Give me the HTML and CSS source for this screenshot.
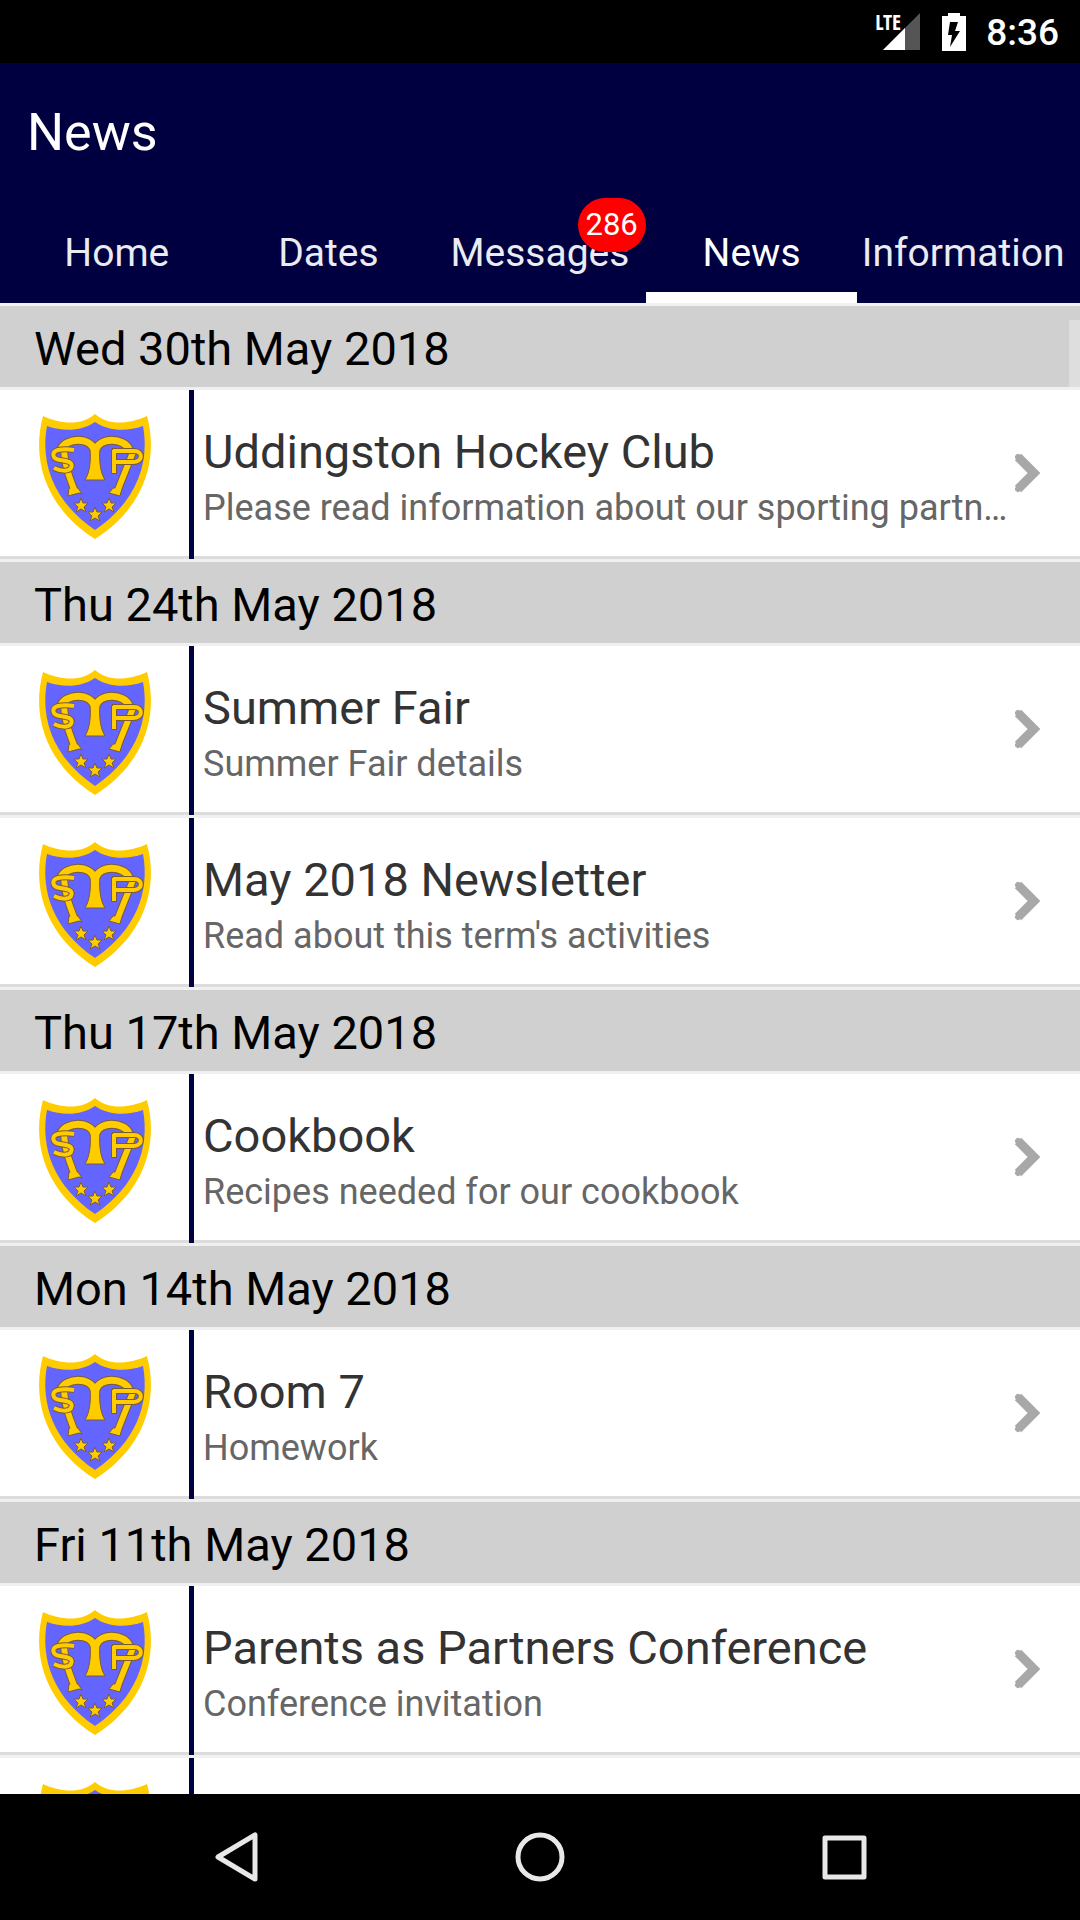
FILE: index.html
```html
<!DOCTYPE html>
<html lang="en">
<head>
<meta charset="utf-8">
<meta name="viewport" content="width=device-width, initial-scale=1">
<title>News</title>
<link rel="stylesheet" href="styles.css">
</head>
<body>
<svg class="defs" aria-hidden="true">
  <symbol id="crest" viewBox="0 0 114 126">
    <path fill="#fc0" d="M5 2C22 10 44 12 57 0C70 12 92 10 109 2C121 46 106 94 57 125C8 94 -7 46 5 2Z"/>
    <path fill="#6464ff" d="M9 12C26 18 44 17 57 8C70 17 88 18 105 12C112 50 98 88 57 116C16 88 2 50 9 12Z"/>
    <g fill="none" stroke-linejoin="round">
      <g stroke="#7a5a3a">
        <path stroke-width="9" d="M23 35C28 24 52 22 57 37C62 22 86 24 91 35"/>
        <path stroke-width="8" d="M26 36C27 54 32 64 37 78M95 38L79 78"/>
      </g>
      <path fill="#fc0" stroke="#7a5a3a" d="M52 34H62C61 46 62 58 67 66H47C52 58 53 46 52 34Z"/>
      <path fill="#fc0" stroke="#7a5a3a" d="M31 74H40L44 80L41 79L30 82ZM75 74H84L82 82L71 79Z"/>
      <g stroke="#fc0">
        <path stroke-width="7" d="M23 35C28 24 52 22 57 37C62 22 86 24 91 35"/>
        <path stroke-width="6" d="M26 36C27 54 32 64 37 78M95 38L79 78"/>
      </g>
      <path id="letters" stroke="#7a5a3a" stroke-width="6" d="M36 36C30 35 25 35 20 36C13 38 14 45 22 46C29 47 36 48 33 54C30 58 22 57 16 54M76 35V60M74 37H96C106 37 105 49 94 48H77"/>
      <path stroke="#fc0" stroke-width="4" d="M36 36C30 35 25 35 20 36C13 38 14 45 22 46C29 47 36 48 33 54C30 58 22 57 16 54M76 36V59M75 37H96C106 37 105 49 94 48H77"/>
    </g>
    <g fill="#fc0" stroke="#7a5a3a">
      <path id="star" d="M43 84L45 89L50 89L46 93L48 98L43 95L38 98L40 93L36 89L41 89Z"/>
      <use href="#star" x="28"/>
      <use href="#star" x="14" y="9"/>
    </g>
  </symbol>
  <symbol id="chevron" viewBox="0 0 28 44">
    <path d="M5 6L21 22L5 38" fill="none" stroke="#a8a8a8" stroke-width="9"/>
    <path d="M5 6L21 22L5 38" fill="none" stroke="#a8a8a8" stroke-width="6" stroke-linecap="round"/>
  </symbol>
</svg>
<div class="screen">
  <div class="status">
    <div class="signal">
      <svg viewBox="0 0 37 37"><path fill="#555" d="M37 0V37H0Z"/><path fill="#fff" d="M22 15V37H0Z"/></svg>
      <span class="lte">LTE</span>
    </div>
    <svg class="battery" viewBox="0 0 24 38"><path fill="#fff" d="M6 0H18V3H24V38H0V3H6Z"/><path d="M8 9H16L13 18H18L8 34L10 22H6Z"/></svg>
    <span class="clock">8:36</span>
  </div>
  <header class="appbar">
    <h1>News</h1>
    <nav class="tabs">
      <a href="#home">Home</a>
      <a href="#dates">Dates</a>
      <a href="#messages">Messages<span class="badge">286</span></a>
      <a href="#news" class="active" aria-current="page">News</a>
      <a href="#information">Information</a>
    </nav>
  </header>
  <main class="feed">
    <h2>Wed 30th May 2018</h2>
    <a class="item" href="#hockey"><svg class="crest"><use href="#crest"/></svg><span class="text"><b>Uddingston Hockey Club</b><small>Please read information about our sporting partnership</small></span><svg class="chevron"><use href="#chevron"/></svg></a>
    <h2>Thu 24th May 2018</h2>
    <a class="item" href="#fair"><svg class="crest"><use href="#crest"/></svg><span class="text"><b>Summer Fair</b><small>Summer Fair details</small></span><svg class="chevron"><use href="#chevron"/></svg></a>
    <a class="item" href="#newsletter"><svg class="crest"><use href="#crest"/></svg><span class="text"><b>May 2018 Newsletter</b><small>Read about this term's activities</small></span><svg class="chevron"><use href="#chevron"/></svg></a>
    <h2>Thu 17th May 2018</h2>
    <a class="item" href="#cookbook"><svg class="crest"><use href="#crest"/></svg><span class="text"><b>Cookbook</b><small>Recipes needed for our cookbook</small></span><svg class="chevron"><use href="#chevron"/></svg></a>
    <h2>Mon 14th May 2018</h2>
    <a class="item" href="#room7"><svg class="crest"><use href="#crest"/></svg><span class="text"><b>Room 7</b><small>Homework</small></span><svg class="chevron"><use href="#chevron"/></svg></a>
    <h2>Fri 11th May 2018</h2>
    <a class="item" href="#conference"><svg class="crest"><use href="#crest"/></svg><span class="text"><b>Parents as Partners Conference</b><small>Conference invitation</small></span><svg class="chevron"><use href="#chevron"/></svg></a>
    <a class="item" href="#more" aria-label="Next item"><svg class="crest"><use href="#crest"/></svg><span class="text"></span></a>
    <span class="scrollbar"></span>
  </main>
  <footer class="navbar">
    <button aria-label="Back"><svg viewBox="0 0 52 52"><path d="M45 4V48L8 26Z"/></svg></button>
    <button aria-label="Home"><svg viewBox="0 0 52 52"><circle cx="26" cy="26" r="22"/></svg></button>
    <button aria-label="Recent apps"><svg viewBox="0 0 52 52"><rect x="7" y="7" width="39" height="39"/></svg></button>
  </footer>
</div>
</body>
</html>
```
FILE: styles.css
```css
* { box-sizing: border-box; }
body { margin: 0; font-family: Roboto, sans-serif; background: #000; }
.defs { display: block; width: 0; height: 0; }
.screen { display: flex; flex-direction: column; height: 100vh; }
a { color: inherit; text-decoration: none; }
h1, h2 { margin: 0; font-weight: 400; }

.status {
  display: flex; flex: none; justify-content: flex-end; align-items: center;
  height: 63px; padding-right: 21px; color: #fff;
}
.signal { position: relative; width: 45px; height: 37px; margin-right: 22px; }
.signal svg { display: block; width: 37px; height: 37px; margin-left: auto; }
.lte {
  position: absolute; left: 0; top: 0;
  font: 700 21px/18px "Liberation Sans Narrow", "Open Sans Condensed", Roboto, sans-serif;
}
.battery { width: 24px; height: 38px; margin-right: 20px; }
.clock { font-size: 37px; font-weight: 500; line-height: 44px; padding-top: 3px; }

.appbar { flex: none; background: #000040; color: #fff; }
h1 { padding: 39px 27px 0; font-size: 52px; line-height: 62px; }
.tabs { display: flex; height: 103px; margin-top: 36px; padding: 0 11px; }
.tabs a {
  flex: 1 1 0; display: flex; justify-content: center; position: relative;
  padding-top: 30px; font-size: 39px; line-height: 46px; color: #ebebf2;
  border-bottom: 11px solid transparent;
}
.tabs .active { color: #fff; border-color: #fff; }
.badge {
  position: absolute; right: 0; top: -2px;
  min-width: 67px; padding: 0 8px; border-radius: 28px;
  background: #f00; color: #fff; font-size: 31px; line-height: 54px; text-align: center;
}

.feed { position: relative; flex: 1; min-height: 0; overflow: hidden; background: #fff; border-top: 3px solid #f0f0f0; }
h2 {
  height: 84px; padding: 0 34px; background: #d0d0d0; border-bottom: 3px solid #f0f0f0;
  font-size: 47px; line-height: 86px; color: #000;
}
.item {
  display: flex; height: 172px; padding-left: 38px;
  background: linear-gradient(#fff 0 166px, #dcdcdc 166px 169px, #f0f0f0 169px);
}
.crest { flex: none; width: 114px; height: 126px; margin: 24px 37px 0 0; }
.text {
  flex: 0 1 828px; min-width: 0; height: 169px; padding: 34px 0 0 9px;
  border-left: 5px solid #000040;
}
.text b, .text small {
  display: block; overflow: hidden; white-space: nowrap; text-overflow: ellipsis;
}
.text b { font-size: 47px; line-height: 56px; font-weight: 400; color: #333; }
.text small { font-size: 36px; line-height: 56px; color: #666; }
.chevron { flex: none; width: 28px; height: 44px; margin: 61px 38px 0 -4px; }
.scrollbar { position: absolute; right: 0; top: 14px; width: 11px; height: 67px; background: #dedede; }

.navbar { display: flex; flex: none; justify-content: center; align-items: center; gap: 252px; height: 126px; background: #000; }
.navbar button { width: 52px; height: 52px; padding: 0; border: 0; background: none; }
.navbar svg { display: block; width: 52px; height: 52px; fill: none; stroke: #e8e8e8; stroke-width: 5; stroke-linejoin: round; }
```
